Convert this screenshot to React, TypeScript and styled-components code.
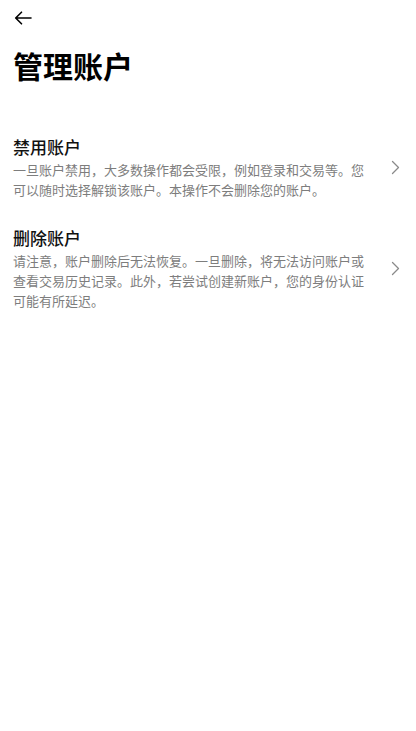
import React from "react";
import styled, { createGlobalStyle } from "styled-components";

const GlobalStyle = createGlobalStyle`
  html, body {
    margin: 0;
    padding: 0;
    background: #ffffff;
  }
  body {
    font-family: "Noto Sans CJK SC", "Noto Sans", sans-serif;
    color: #000;
  }
`;

const Page = styled.div`
  width: 416px;
  min-height: 731px;
  background: #fff;
`;

const TopBar = styled.header`
  height: 36px;
  display: flex;
  align-items: center;
  padding-left: 14px;
`;

const BackBtn = styled.button`
  border: none;
  background: none;
  padding: 0;
  display: flex;
  align-items: center;
  cursor: pointer;
`;

const Title = styled.h1`
  margin: 10px 0 0;
  padding-left: 13px;
  font-size: 30px;
  line-height: 39px;
  font-weight: 700;
`;

const OptionList = styled.ul`
  list-style: none;
  margin: 37px 0 0;
  padding: 0;
`;

const Option = styled.li`
  display: flex;
  align-items: center;
  gap: 16px;
  padding: 13px 11px 13px 13px;
  cursor: pointer;
`;

const OptionText = styled.div`
  flex: 1;
  min-width: 0;
`;

const OptionTitle = styled.div`
  font-size: 17px;
  line-height: 24px;
  font-weight: 500;
  color: #111;
`;

const OptionDesc = styled.p`
  margin: 1px 0 0;
  font-size: 13px;
  line-height: 20px;
  color: #7d7d7d;
`;

const Chevron = styled.span`
  width: 20px;
  display: flex;
  justify-content: center;
`;

interface IOption {
  id: string;
  title: string;
  desc: string;
}

const options: IOption[] = [
  {
    id: "disable",
    title: "禁用账户",
    desc: "一旦账户禁用，大多数操作都会受限，例如登录和交易等。您可以随时选择解锁该账户。本操作不会删除您的账户。",
  },
  {
    id: "delete",
    title: "删除账户",
    desc: "请注意，账户删除后无法恢复。一旦删除，将无法访问账户或查看交易历史记录。此外，若尝试创建新账户，您的身份认证可能有所延迟。",
  },
];

function App() {
  return (
    <Page>
      <GlobalStyle />
      <TopBar>
        <BackBtn aria-label="返回">
          <svg width="18" height="14" viewBox="0 0 18 14" fill="none">
            <path
              d="M17 7H2M7.5 1.2L1.7 7l5.8 5.8"
              stroke="#000"
              strokeWidth="1.6"
              strokeLinecap="round"
              strokeLinejoin="round"
            />
          </svg>
        </BackBtn>
      </TopBar>
      <Title>管理账户</Title>
      <OptionList>
        {options.map((opt) => (
          <Option key={opt.id}>
            <OptionText>
              <OptionTitle>{opt.title}</OptionTitle>
              <OptionDesc>{opt.desc}</OptionDesc>
            </OptionText>
            <Chevron>
              <svg width="9" height="15" viewBox="0 0 9 15" fill="none">
                <path
                  d="M1.5 1.5l6 6-6 6"
                  stroke="#8a8a8a"
                  strokeWidth="1.3"
                  strokeLinecap="round"
                  strokeLinejoin="round"
                />
              </svg>
            </Chevron>
          </Option>
        ))}
      </OptionList>
    </Page>
  );
}

export default App;
